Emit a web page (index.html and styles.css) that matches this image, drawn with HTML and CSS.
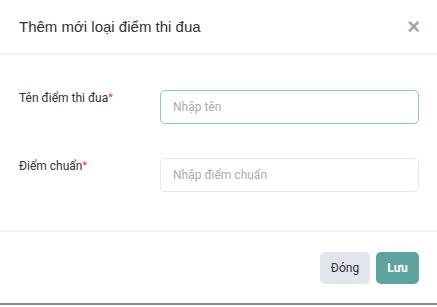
FILE: index.html
```html
<!DOCTYPE html>
<html lang="vi">
  <head>
    <meta charset="UTF-8" />
    <meta name="viewport" content="width=device-width, initial-scale=1.0" />
    <title>Thêm mới loại điểm thi đua</title>
    <link rel="stylesheet" href="styles.css">
  </head>
  <body>
    <div class="modal">
      <div class="modal-header">
        <h1 class="modal-title">Thêm mới loại điểm thi đua</h1>
        <button class="close" type="button">&times;</button>
      </div>
      <div class="modal-body">
        <div class="row">
          <label for="name">Tên điểm thi đua<span class="req">*</span></label>
          <input type="text" id="name" class="focus" placeholder="Nhập tên" />
        </div>
        <div class="row">
          <label for="score">Điểm chuẩn<span class="req">*</span></label>
          <input type="text" id="score" placeholder="Nhập điểm chuẩn" />
        </div>
      </div>
      <div class="modal-footer">
        <button class="btn btn-close" type="button">Đóng</button>
        <button class="btn btn-save" type="button">Lưu</button>
      </div>
    </div>
  </body>
</html>
```

FILE: styles.css
```css
body {
  margin: 0;
  background-color: #fff;
  font-family: Roboto, "Liberation Sans", sans-serif;
}
.modal {
  height: 305px;
  border-bottom: 2px solid #8a8a8a;
  box-sizing: border-box;
  display: flex;
  flex-direction: column;
}
.modal-header {
  height: 53px;
  display: flex;
  align-items: center;
  justify-content: space-between;
  padding: 0 17px 0 19px;
  border-bottom: 2px solid #f2f2f2;
}
.modal-title {
  margin: 0;
  font-family: "Liberation Sans", Arial, sans-serif;
  font-size: 15px;
  font-weight: normal;
  color: #333;
}
.close {
  border: none;
  background: none;
  padding: 0;
  font-size: 22px;
  font-weight: bold;
  color: #a6a6a6;
  cursor: pointer;
  line-height: 1;
}
.modal-body {
  height: 177px;
  padding: 35px 18px 0 19px;
  box-sizing: border-box;
  border-bottom: 2px solid #f2f2f2;
}
.row {
  display: flex;
  align-items: flex-start;
  margin-bottom: 34px;
}
label {
  width: 141px;
  font-size: 12px;
  color: #333;
  padding-top: 1px;
}
.req {
  color: #e53935;
  font-size: 11px;
  vertical-align: top;
}
input {
  flex: 1;
  height: 34px;
  box-sizing: border-box;
  border: 1px solid #e6e8ea;
  border-radius: 5px;
  padding: 0 12px;
  font-family: Roboto, sans-serif;
  font-size: 12px;
  outline: none;
}
input.focus {
  border-color: #90c6c2;
}
input::placeholder {
  color: #a8acb3;
}
.modal-footer {
  flex: 1;
  display: flex;
  justify-content: flex-end;
  align-items: flex-start;
  gap: 6px;
  padding: 20px 18px 0 0;
}
.btn {
  height: 32px;
  border: none;
  border-radius: 5px;
  font-family: Roboto, sans-serif;
  font-size: 12px;
  cursor: pointer;
}
.btn-close {
  width: 50px;
  background-color: #e3e5ec;
  color: #333;
}
.btn-save {
  width: 43px;
  background-color: #5fa39f;
  color: #fff;
  font-weight: bold;
}
```
